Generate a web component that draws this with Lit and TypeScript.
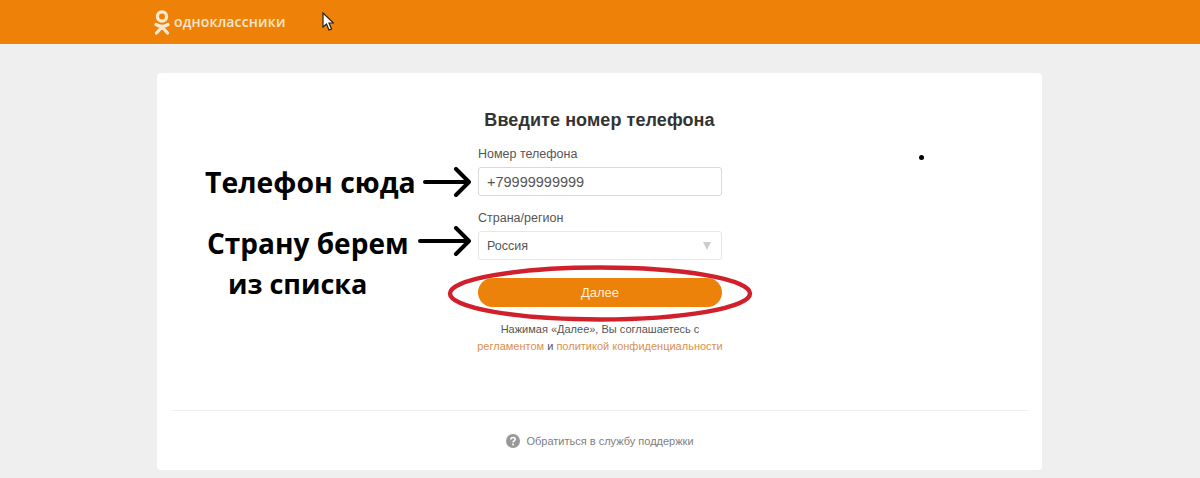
import { LitElement, css, html } from "lit";
import { customElement } from "lit/decorators.js";

@customElement("app-root")
export class AppRoot extends LitElement {
  static styles = css`
    :host {
      display: block;
      height: 478px;
      overflow: hidden;
      background: #efefef;
      font-family: "Liberation Sans", Arial, sans-serif;
      color: #333;
    }
    .top {
      height: 44px;
      background: #ee8208;
      display: flex;
      align-items: center;
      padding-left: 154px;
      gap: 4px;
      position: relative;
    }
    .logo-text {
      color: #fbe6cd;
      font-family: "Open Sans", sans-serif;
      font-size: 14px;
      font-weight: 600;
      letter-spacing: 0.17px;
      margin-top: -2px;
    }
    .logo {
      display: block;
    }
    .cursor {
      position: absolute;
      left: 322px;
      top: 12px;
    }
    .card {
      position: relative;
      box-sizing: border-box;
      width: 885px;
      height: 397px;
      margin: 29px 0 0 157px;
      background: #fff;
      border-radius: 4px;
      padding: 36px 14px 0;
    }
    h1 {
      margin: 0;
      text-align: center;
      font-size: 18px;
      line-height: 22px;
      font-weight: bold;
      color: #333;
      letter-spacing: 0.08px;
    }
    .form {
      width: 244px;
      margin: 15px auto 0;
      padding-left: 1px;
      display: flex;
      flex-direction: column;
    }
    label {
      font-size: 12.5px;
      line-height: 16px;
      color: #555;
      margin-bottom: 5px;
    }
    .field {
      box-sizing: border-box;
      height: 29px;
      border: 1px solid #d9d9d9;
      border-radius: 3px;
      display: flex;
      align-items: center;
      justify-content: space-between;
      padding: 0 8px;
      font-size: 14.5px;
      color: #555;
      margin-bottom: 14px;
    }
    .country {
      border-color: #e6e6e6;
      color: #555;
      font-size: 12.5px;
      margin-bottom: 18px;
    }
    .caret {
      width: 0;
      height: 0;
      border: 4px solid transparent;
      border-top: 8px solid #ccc;
      border-bottom: 0;
      margin-right: 2px;
    }
    .next {
      height: 29px;
      border-radius: 15px;
      background: #ec8209;
      color: #fdeed8;
      font-size: 13px;
      display: flex;
      align-items: center;
      justify-content: center;
    }
    .terms {
      margin: 14px -20px 0;
      font-size: 11px;
      line-height: 17px;
      text-align: center;
      color: #555;
    }
    .terms a {
      color: #da8f50;
      text-decoration: none;
    }
    hr {
      border: 0;
      height: 1px;
      background: #efefef;
      margin: 55px 0 0;
    }
    .support {
      display: flex;
      align-items: center;
      justify-content: center;
      gap: 6px;
      margin-top: 23px;
      padding-left: 1px;
      font-size: 11px;
      color: #808080;
    }
    .note {
      position: absolute;
      font-family: "Open Sans", sans-serif;
      font-size: 28px;
      line-height: 36px;
      font-weight: 700;
      color: #000;
      white-space: nowrap;
    }
    .note-phone {
      left: 48px;
      top: 91px;
      font-size: 28.4px;
    }
    .note-country {
      left: 50px;
      top: 152px;
    }
    .note-list {
      left: 71px;
      top: 193px;
      font-size: 27px;
    }
    .arrow {
      position: absolute;
    }
    .ring {
      position: absolute;
      left: 288px;
      top: 190px;
    }
    .dot {
      position: absolute;
      left: 762px;
      top: 82px;
      width: 5px;
      height: 5px;
      border-radius: 50%;
      background: #000;
    }
  `;

  arrow(left: number, top: number, width: number) {
    const tip = width - 2;
    return html`<svg
      class="arrow"
      style="left:${left}px;top:${top}px"
      width=${width}
      height="30"
      fill="none"
      stroke="#000"
      stroke-width="4"
      stroke-linecap="round"
      stroke-linejoin="round"
    >
      <path d="M2 15H${tip}M${tip - 13} 2L${tip} 15L${tip - 13} 28" />
    </svg>`;
  }

  render() {
    return html`
      <div class="top">
        <svg class="logo" width="16" height="25" viewBox="0 0 16 25" fill="none" stroke="#fbe9d4" stroke-linecap="round">
          <circle cx="8" cy="6.5" r="4.6" stroke-width="3.2" />
          <path d="M2 14.5Q8 18 14 14.5M8 16.5V17L2.5 23M8 17L13.5 23" stroke-width="3.2" />
        </svg>
        <span class="logo-text">одноклассники</span>
        <svg class="cursor" width="12" height="19" viewBox="0 0 12 19">
          <path d="M1 1V15L4.5 12L7 18L9.5 17L7 11H11.5Z" fill="#fff" stroke="#222" stroke-width="1.2" />
        </svg>
      </div>
      <div class="card">
        <h1>Введите номер телефона</h1>
        <div class="form">
          <label>Номер телефона</label>
          <div class="field">+79999999999</div>
          <label>Страна/регион</label>
          <div class="field country">Россия<span class="caret"></span></div>
          <div class="next">Далее</div>
          <div class="terms">
            Нажимая «Далее», Вы соглашаетесь с<br />
            <a>регламентом</a> и <a>политикой конфиденциальности</a>
          </div>
        </div>
        <hr />
        <div class="support">
          <svg width="14" height="14" viewBox="0 0 14 14">
            <circle cx="7" cy="7" r="7" fill="#999" />
            <path d="M4.9 5.4C4.9 2.9 9.2 2.9 9.2 5.3C9.2 6.8 7 6.8 7 8.4" fill="none" stroke="#fff" stroke-width="1.6" />
            <circle cx="7" cy="10.6" r="1" fill="#fff" />
          </svg>
          Обратиться в службу поддержки
        </div>

        <div class="note note-phone">Телефон сюда</div>
        ${this.arrow(266, 94, 48)}
        <div class="note note-country">Страну берем</div>
        ${this.arrow(261, 153, 53)}
        <div class="note note-list">из списка</div>
        <svg class="ring" width="310" height="64" viewBox="0 0 310 64" fill="none">
          <ellipse cx="155" cy="30.5" rx="150" ry="26" stroke="#d0202c" stroke-width="4.4" />
        </svg>
        <span class="dot"></span>
      </div>
    `;
  }
}
